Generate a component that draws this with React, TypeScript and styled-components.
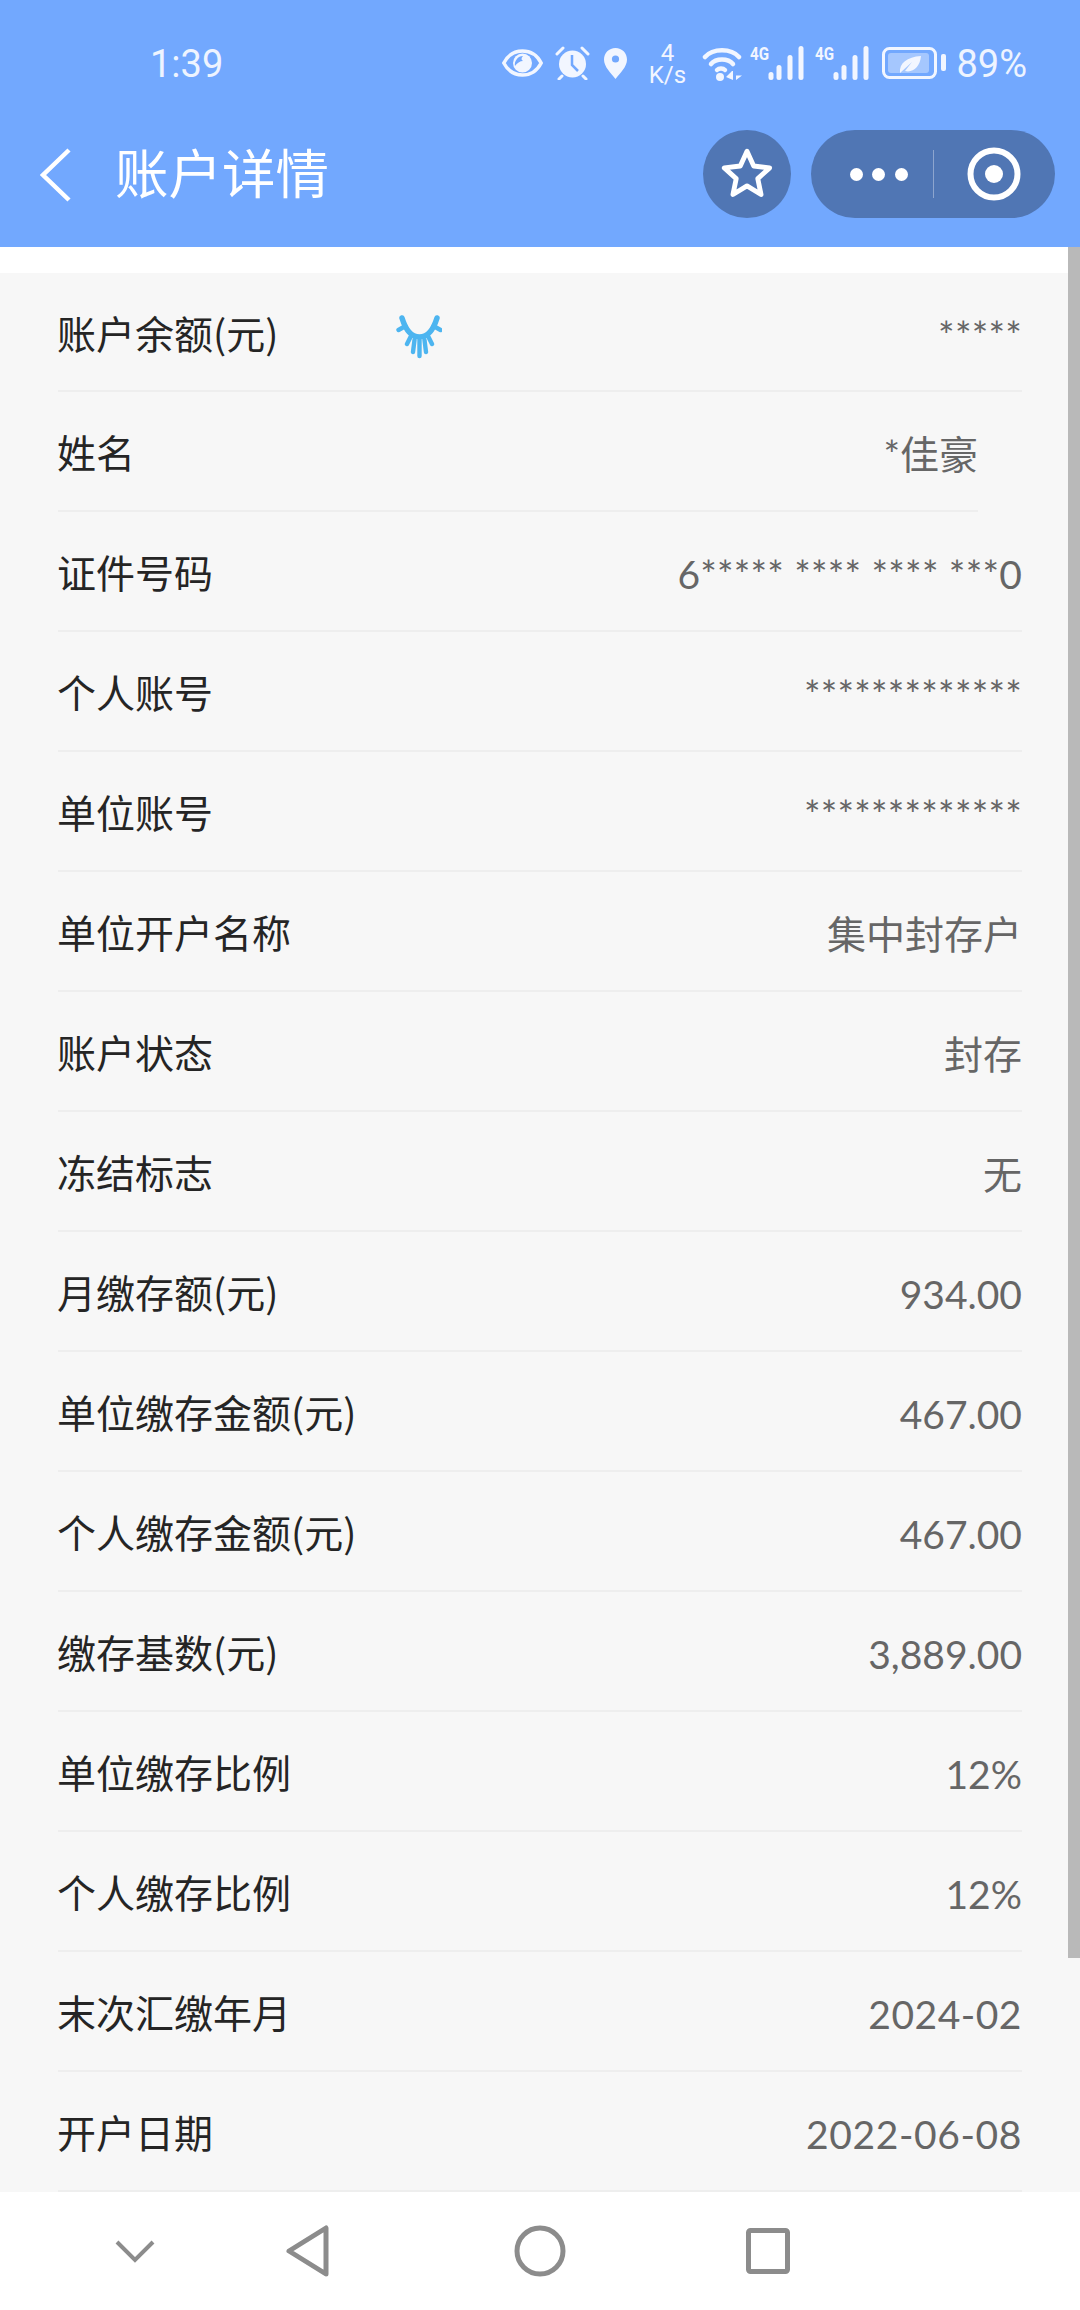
import React from "react";
import styled, { createGlobalStyle } from "styled-components";

const GlobalStyle = createGlobalStyle`
  html, body {
    margin: 0;
    padding: 0;
    background: #fff;
  }
  body {
    font-family: "Lato", "Noto Sans CJK SC", sans-serif;
    overflow: hidden;
  }
`;

const Page = styled.div`
  width: 1080px;
  height: 2310px;
  display: flex;
  flex-direction: column;
  overflow: hidden;
`;

const Header = styled.header`
  height: 247px;
  flex-shrink: 0;
  background: #72a8fe;
  color: #fff;
  display: flex;
  flex-direction: column;
`;

const StatusBar = styled.div`
  height: 126px;
  display: flex;
  align-items: center;
  padding: 0 53px 0 150px;
  justify-content: space-between;
`;

const Clock = styled.span`
  font-family: "Roboto", sans-serif;
  font-size: 38px;
  line-height: 40px;
  margin-top: 2px;
  color: #eef4ff;
`;

const StatusIcons = styled.div`
  display: flex;
  align-items: center;
`;

const StatusIcon = styled.svg<{ $gap?: number }>`
  display: block;
  flex-shrink: 0;
  margin-right: ${(p) => p.$gap ?? 0}px;
`;

const Speed = styled.div`
  width: 38px;
  margin-right: 16px;
  margin-top: 2px;
  display: flex;
  flex-direction: column;
  align-items: center;
  font-family: "Roboto", sans-serif;
  font-size: 24px;
  line-height: 22px;
  color: #f2f6ff;
`;

const BatteryText = styled.span`
  font-family: "Roboto", sans-serif;
  font-size: 38px;
  line-height: 40px;
  margin-top: 2px;
  color: #eef4ff;
  margin-left: 10px;
`;

const TitleBar = styled.div`
  flex: 1;
  display: flex;
  align-items: flex-start;
  padding: 4px 25px 0 40px;
`;

const BackIcon = styled.svg`
  display: block;
  margin-top: 18px;
`;

const Title = styled.h1`
  margin: 11px 0 0 43px;
  flex: 1;
  font-family: "Noto Sans CJK SC", sans-serif;
  font-size: 53.5px;
  line-height: 60px;
  font-weight: 400;
  color: #fff;
`;

const RoundButton = styled.div`
  width: 88px;
  height: 88px;
  border-radius: 50%;
  background: #5076b4;
  display: flex;
  align-items: center;
  justify-content: center;
  margin-right: 20px;
`;

const Capsule = styled.div`
  width: 244px;
  height: 88px;
  border-radius: 44px;
  background: #5076b4;
  display: flex;
  align-items: center;
`;

const CapsuleSide = styled.div`
  flex: 1;
  display: flex;
  align-items: center;
  justify-content: center;
`;

const CapsuleDivider = styled.div`
  width: 1px;
  height: 48px;
  background: rgba(255, 255, 255, 0.35);
`;

const Dots = styled.div`
  display: flex;
  gap: 9.5px;
  margin-left: 14px;
`;

const Dot = styled.span`
  width: 13px;
  height: 13px;
  border-radius: 50%;
  background: #fff;
`;

const Main = styled.main`
  flex: 1;
  min-height: 0;
  position: relative;
  overflow: hidden;
  padding-top: 26px;
`;

const ScrollThumb = styled.div`
  position: absolute;
  top: 0;
  right: 0;
  width: 12px;
  height: 1711px;
  background: #b9b9b9;
`;

const List = styled.div`
  background: #f7f7f7;
  padding: 0 58px 0 58px;
  height: 100%;
`;

const Row = styled.div<{ $short?: boolean }>`
  height: 120px;
  box-sizing: border-box;
  display: flex;
  align-items: center;
  padding-top: 6px;
  margin-right: ${(p) => (p.$short ? 44 : 0)}px;
  border-bottom: 2px solid #eeeeee;

  &:first-child {
    height: 119px;
  }
`;

const Label = styled.span`
  font-family: "Noto Sans CJK SC", sans-serif;
  font-size: 39px;
  line-height: 50px;
  color: #252525;
  margin-bottom: 6px;
  margin-left: -1px;
`;

const Value = styled.span<{ $spacing?: number }>`
  margin-left: auto;
  font-family: "Lato", "Noto Sans CJK SC", sans-serif;
  font-size: 39px;
  line-height: 50px;
  letter-spacing: ${(p) => p.$spacing ?? 0}px;
  color: #666666;
`;

const EyeLash = styled.svg`
  display: block;
  margin-left: 118px;
  margin-top: 4px;
`;

const NavBar = styled.nav`
  height: 118px;
  flex-shrink: 0;
  background: #fff;
  display: flex;
  align-items: center;
  padding-left: 114px;
`;

const NavIcon = styled.svg<{ $gap?: number }>`
  display: block;
  flex-shrink: 0;
  margin-right: ${(p) => p.$gap ?? 0}px;
`;

const rows = [
  { label: "姓名", value: "*佳豪", short: true },
  { label: "证件号码", value: "6***** **** **** ***0", spacing: 0.2 },
  { label: "个人账号", value: "*************", spacing: 0.2 },
  { label: "单位账号", value: "*************", spacing: 0.2 },
  { label: "单位开户名称", value: "集中封存户" },
  { label: "账户状态", value: "封存" },
  { label: "冻结标志", value: "无" },
  { label: "月缴存额(元)", value: "934.00" },
  { label: "单位缴存金额(元)", value: "467.00" },
  { label: "个人缴存金额(元)", value: "467.00" },
  { label: "缴存基数(元)", value: "3,889.00" },
  { label: "单位缴存比例", value: "12%" },
  { label: "个人缴存比例", value: "12%" },
  { label: "末次汇缴年月", value: "2024-02", spacing: 0.5 },
  { label: "开户日期", value: "2022-06-08", spacing: 0.6 },
];

const Signal = ({ gap }: { gap?: number }) => (
  <StatusIcon $gap={gap} width="55" height="42" viewBox="0 -3 55 42">
    <text x="0" y="15" fontSize="18" fontWeight="700" fontFamily="Roboto, sans-serif" fill="#f2f6ff" textLength="19" lengthAdjust="spacingAndGlyphs">4G</text>
    <g fill="#f2f6ff">
      <rect x="18.5" y="27" width="5" height="8" rx="2.5" />
      <rect x="26.5" y="20" width="5" height="15" rx="2.5" />
      <rect x="37.5" y="10" width="5" height="25" rx="2.5" />
      <rect x="48.5" y="1" width="5" height="34" rx="2.5" />
    </g>
  </StatusIcon>
);

export default function App() {
  return (
    <Page>
      <GlobalStyle />
      <Header>
        <StatusBar>
          <Clock>1:39</Clock>
          <StatusIcons>
            <StatusIcon $gap={12} width="41" height="28" viewBox="0 0 41 28">
              <path d="M1.8 14C6 6 13 2 20.5 2S35 6 39.2 14C35 22 28 26 20.5 26S6 22 1.8 14Z" fill="none" stroke="#f2f6ff" strokeWidth="3.5" />
              <circle cx="20.5" cy="14" r="9.5" fill="#f2f6ff" />
              <path d="M13 17c-1-5 3-10 8-10-2 2-2 4 0 5-3 0-6 2-8 5z" fill="#72a8fe" />
            </StatusIcon>
            <StatusIcon $gap={13} width="35" height="34" viewBox="0 0 35 34">
              <circle cx="17.5" cy="18" r="13.5" fill="#f2f6ff" />
              <path d="M17 9v10l6 6" fill="none" stroke="#72a8fe" strokeWidth="2.5" />
              <path d="M2 8l6-6M33 8l-6-6M7 30l-3 3M28 30l3 3" stroke="#f2f6ff" strokeWidth="3" strokeLinecap="round" />
            </StatusIcon>
            <StatusIcon $gap={20} width="25" height="33" viewBox="0 0 25 33">
              <path d="M12.5 1C6 1 1 6 1 12.5 1 20 8 26 12.5 32 17 26 24 20 24 12.5 24 6 19 1 12.5 1Z" fill="#f2f6ff" />
              <circle cx="12.5" cy="12" r="3.6" fill="#72a8fe" />
            </StatusIcon>
            <Speed>
              <span>4</span>
              <span>K/s</span>
            </Speed>
            <StatusIcon $gap={6} width="42" height="36" viewBox="0 0 42 36">
              <g fill="none" stroke="#f2f6ff" strokeWidth="4.5" strokeLinecap="round">
                <path d="M3 12C11 3 29 3 37 12" />
                <path d="M9 19C14 13 26 13 31 19" />
                <path d="M15 25C17 23 21 23 23 25" />
              </g>
              <circle cx="18" cy="32" r="4" fill="#f2f6ff" />
              <path d="M31 26v9l-7-3 6-6zM34 26v9l6-4.500h-6z" fill="#f2f6ff" />
            </StatusIcon>
            <Signal gap={10} />
            <Signal gap={12} />
            <StatusIcon width="64" height="32" viewBox="0 0 64 32">
              <rect x="1.500" y="1.500" width="52" height="29" rx="6" fill="none" stroke="#f2f6ff" strokeWidth="3" />
              <rect x="6" y="6" width="41" height="20" rx="3" fill="#f2f6ff" fillOpacity="0.4" />
              <path d="M18 26c-1-10 7-16 21-17-1 11-8 17-16 15l7-9-12 11z" fill="#f2f6ff" />
              <rect x="59" y="7" width="5" height="17" rx="2" fill="#f2f6ff" />
            </StatusIcon>
            <BatteryText>89%</BatteryText>
          </StatusIcons>
        </StatusBar>
        <TitleBar>
          <BackIcon width="32" height="54" viewBox="0 0 32 54">
            <path d="M29 2L3 27l26 25" fill="none" stroke="#fff" strokeWidth="4.500" />
          </BackIcon>
          <Title>账户详情</Title>
          <RoundButton>
            <svg width="54" height="54" viewBox="0 0 50 50">
              <path d="M25 4l6.200 13.600 14.800 1.700-11 10 3 14.700L25 36l-13 8 3-14.700-11-10 14.800-1.700z" fill="none" stroke="#fff" strokeWidth="4.500" strokeLinejoin="round" />
            </svg>
          </RoundButton>
          <Capsule>
            <CapsuleSide>
              <Dots>
                <Dot />
                <Dot />
                <Dot />
              </Dots>
            </CapsuleSide>
            <CapsuleDivider />
            <CapsuleSide>
              <svg width="54" height="54" viewBox="0 0 54 54">
                <circle cx="27" cy="27" r="23.500" fill="none" stroke="#fff" strokeWidth="6" />
                <circle cx="27" cy="27" r="9" fill="#fff" />
              </svg>
            </CapsuleSide>
          </Capsule>
        </TitleBar>
      </Header>
      <Main>
        <List>
          <Row>
            <Label>账户余额(元)</Label>
            <EyeLash width="46" height="44" viewBox="12 10 46 44">
              <path d="M18 13C22 26 28 32 35.500 32S49 26 53 13" fill="none" stroke="#4db5f0" strokeWidth="5.500" strokeLinecap="round" />
              <path d="M14.500 25l7-4M23 39l4-8M29 47l1.500-12M35.500 51V35M42 47l-1.500-12M48 39l-4-8M56.500 25l-7-4" fill="none" stroke="#4db5f0" strokeWidth="4.400" strokeLinecap="round" />
            </EyeLash>
            <Value $spacing={0.2}>*****</Value>
          </Row>
          {rows.map((row) => (
            <Row key={row.label} $short={row.short}>
              <Label>{row.label}</Label>
              <Value $spacing={row.spacing}>{row.value}</Value>
            </Row>
          ))}
        </List>
        <ScrollThumb />
      </Main>
      <NavBar>
        <NavIcon $gap={129} width="42" height="24" viewBox="0 0 42 24">
          <path d="M3 3l18 18L39 3" fill="none" stroke="#8c8c8c" strokeWidth="4" />
        </NavIcon>
        <NavIcon $gap={183} width="46" height="54" viewBox="0 0 46 54">
          <path d="M41 4v46L4 27z" fill="none" stroke="#8c8c8c" strokeWidth="5" strokeLinejoin="round" />
        </NavIcon>
        <NavIcon $gap={180} width="52" height="52" viewBox="0 0 52 52">
          <circle cx="26" cy="26" r="23" fill="none" stroke="#8c8c8c" strokeWidth="5" />
        </NavIcon>
        <NavIcon width="44" height="46" viewBox="0 0 44 46">
          <rect x="2.500" y="2.500" width="39" height="41" rx="2" fill="none" stroke="#8c8c8c" strokeWidth="5" />
        </NavIcon>
      </NavBar>
    </Page>
  );
}
